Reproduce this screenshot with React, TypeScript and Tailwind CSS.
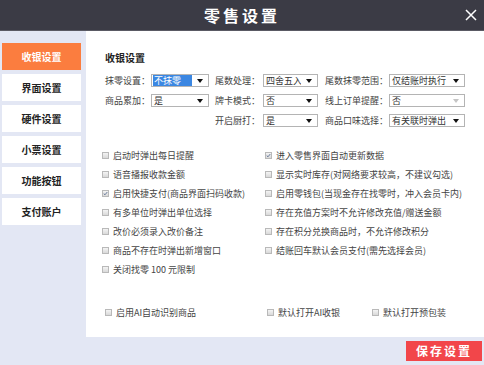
import type { ReactNode } from 'react'

const font = { fontFamily: '"Noto Sans CJK SC", "Noto Sans", sans-serif' }

const menu = ['收银设置', '界面设置', '硬件设置', '小票设置', '功能按钮', '支付账户']

const leftChecks = [
  { text: '启动时弹出每日提醒', on: false },
  { text: '语音播报收款金额', on: false },
  { text: '启用快捷支付(商品界面扫码收款)', on: true },
  { text: '有多单位时弹出单位选择', on: false },
  { text: '改价必须录入改价备注', on: false },
  { text: '商品不存在时弹出新增窗口', on: false },
  { text: '关闭找零 100 元限制', on: false },
]

const rightChecks = [
  { text: '进入零售界面自动更新数据', on: true },
  { text: '显示实时库存(对网络要求较高，不建议勾选)', on: false },
  { text: '启用零钱包(当现金存在找零时，冲入会员卡内)', on: false },
  { text: '存在充值方案时不允许修改充值/赠送金额', on: false },
  { text: '存在积分兑换商品时，不允许修改积分', on: false },
  { text: '结账回车默认会员支付(需先选择会员)', on: false },
]

function Select({ value, w, active, dim }: { value: string; w: string; active?: boolean; dim?: boolean }) {
  return (
    <div className={`${w} h-[13px] border border-[#b4b4b4] bg-white flex items-center pl-[1px] pr-[5px] shrink-0`}>
      <div className={`flex-1 min-w-0 h-[11px] flex items-center pl-[1px] text-[9px] leading-none whitespace-nowrap overflow-hidden ${active ? 'bg-[#3b87e2] text-white' : 'text-[#333]'}`}>
        {value}
      </div>
      <div className={`ml-[5px] shrink-0 w-0 h-0 border-l-[3px] border-r-[3px] border-t-[4px] border-l-transparent border-r-transparent ${dim ? 'border-t-[#c4c4c4]' : 'border-t-[#111]'}`} />
    </div>
  )
}

function Label({ w, children }: { w: string; children: ReactNode }) {
  return <span className={`${w} shrink-0 text-[9px] leading-none text-[#444] whitespace-nowrap`}>{children}</span>
}

function Check({ text, on }: { text: string; on?: boolean }) {
  return (
    <div className="flex items-center gap-[4px] h-[19px]">
      <div className="w-[7px] h-[7px] border border-[#b9b9b9] bg-gradient-to-b from-[#f4f4f4] to-[#d9d9d9] flex items-center justify-center shrink-0">
        {on && (
          <svg width="7" height="7" viewBox="0 0 7 7">
            <path d="M1 3.6 L2.8 5.3 L6 1.4" fill="none" stroke="#4a5f86" strokeWidth="1.1" />
          </svg>
        )}
      </div>
      <span className="text-[9px] leading-none text-[#444] whitespace-nowrap">{text}</span>
    </div>
  )
}

export default function App() {
  return (
    <div className="w-[484px] h-[365px] flex flex-col bg-[#e3e7f4] overflow-hidden" style={font}>
      <div className="h-[31px] bg-[#3b3b45] flex items-center shrink-0 border-b border-[#5a5a64]">
        <div className="w-[40px]" />
        <div className="flex-1 text-center text-white text-[16px] font-bold tracking-[3px]">零售设置</div>
        <div className="w-[40px] flex justify-end pr-[7px]">
          <svg width="12" height="12" viewBox="0 0 12 12">
            <path d="M1 1 L11 11 M11 1 L1 11" stroke="#fff" strokeWidth="1.5" />
          </svg>
        </div>
      </div>

      <div className="flex flex-1">
        <div className="w-[86px] shrink-0 flex flex-col gap-[4px] pt-[12px] pl-[2px] pr-[5px]">
          {menu.map((m, i) => (
            <div
              key={m}
              className={`h-[27px] flex items-center justify-center text-[10px] font-bold ${i === 0 ? 'bg-[#fb7d3f] text-white' : 'bg-white text-[#222]'}`}
            >
              {m}
            </div>
          ))}
        </div>

        <div className="flex-1 flex flex-col">
          <div className="h-[306px] bg-white pl-[19px] pt-[20px]">
            <div className="text-[10px] font-bold text-[#222] leading-[14px]">收银设置</div>

            <div className="mt-[9px] flex flex-col gap-[7px]">
              <div className="flex items-center">
                <Label w="w-[46px]">抹零设置：</Label>
                <Select value="不抹零" w="w-[58px]" active />
                <Label w="w-[54px] pl-[6px]">尾数处理：</Label>
                <Select value="四舍五入" w="w-[55px]" />
                <Label w="w-[71px] pl-[7px]">尾数抹零范围：</Label>
                <Select value="仅结账时执行" w="w-[76px]" />
              </div>
              <div className="flex items-center">
                <Label w="w-[46px]">商品累加：</Label>
                <Select value="是" w="w-[58px]" />
                <Label w="w-[54px] pl-[6px]">牌卡模式：</Label>
                <Select value="否" w="w-[55px]" />
                <Label w="w-[71px] pl-[7px]">线上订单提醒：</Label>
                <Select value="否" w="w-[76px]" dim />
              </div>
              <div className="flex items-center">
                <div className="w-[104px] shrink-0" />
                <Label w="w-[54px] pl-[6px]">开启厨打：</Label>
                <Select value="是" w="w-[55px]" />
                <Label w="w-[71px] pl-[7px]">商品口味选择：</Label>
                <Select value="有关联时弹出" w="w-[76px]" />
              </div>
            </div>

            <div className="mt-[19px] flex -ml-[3px]">
              <div className="w-[163px] flex flex-col">
                {leftChecks.map((c) => (
                  <Check key={c.text} text={c.text} on={c.on} />
                ))}
              </div>
              <div className="flex flex-col">
                {rightChecks.map((c) => (
                  <Check key={c.text} text={c.text} on={c.on} />
                ))}
              </div>
            </div>

            <div className="mt-[24px] flex">
              <div className="w-[162px]">
                <Check text="启用AI自动识别商品" />
              </div>
              <div className="w-[105px]">
                <Check text="默认打开AI收银" />
              </div>
              <Check text="默认打开预包装" />
            </div>
          </div>

          <div className="flex-1 flex items-center justify-end pr-[2px]">
            <button className="w-[76px] h-[20px] bg-[#f2464a] text-white text-[12px] font-bold tracking-[2px]">
              保存设置
            </button>
          </div>
        </div>
      </div>
    </div>
  )
}
